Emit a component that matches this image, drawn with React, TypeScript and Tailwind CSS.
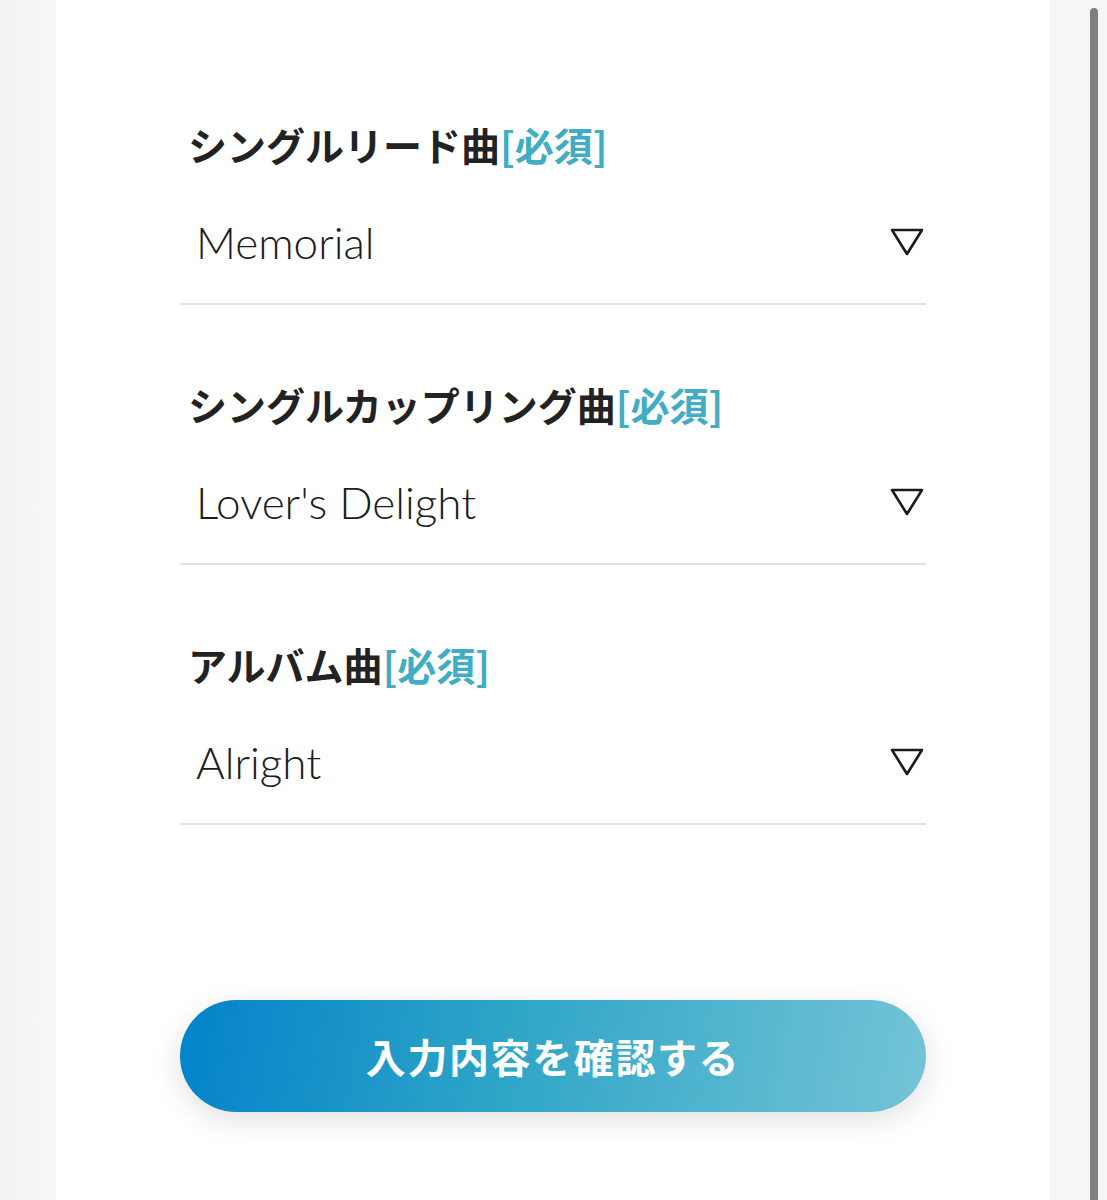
import { useState } from "react";

const fields = [
    { label: "シングルリード曲", value: "Memorial" },
    { label: "シングルカップリング曲", value: "Lover's Delight" },
    { label: "アルバム曲", value: "Alright" },
];

function Triangle() {
    return (
        <svg width="34" height="28" viewBox="0 0 34 28" className="shrink-0">
            <path d="M2 2 L32 2 L17 26 Z" fill="none" stroke="#1a1a1a" strokeWidth="2.6" strokeLinejoin="round" />
        </svg>
    );
}

function SelectField({ label, value }: { label: string; value: string }) {
    const [v] = useState(value);
    return (
        <div className="flex flex-col">
            <div className="pl-2 text-[39px] font-bold leading-[46px] text-[#222]">
                {label}
                <span className="text-[#41acc3]">[必須]</span>
            </div>
            <div className="mt-[48px] flex items-center justify-between border-b-2 border-[#e3e3e3] pb-[34px] pl-4 pr-[2px]">
                <span className="font-['Lato','Noto_Sans',sans-serif] text-[44px] font-light leading-[54px] text-[#1c1c1c]">
                    {v}
                </span>
                <Triangle />
            </div>
        </div>
    );
}

export default function App() {
    return (
        <div className="flex min-h-[1200px] bg-[#f6f6f6] font-['Noto_Sans_CJK_JP',sans-serif]">
            <div className="w-14 bg-gradient-to-r from-[#f2f2f2] to-[#f8f8f8]" />
            <main className="w-[994px] bg-white px-[124px] pt-[121px]">
                <div className="flex flex-col gap-[76px]">
                    {fields.map((f) => (
                        <SelectField key={f.label} label={f.label} value={f.value} />
                    ))}
                </div>
                <button className="mt-[175px] flex h-[112px] w-full items-center justify-center rounded-full bg-[linear-gradient(100deg,#0282ca_0%,#30a6c7_45%,#74c4d6_100%)] text-[40px] font-bold tracking-[0.04em] text-white shadow-[0_8px_30px_rgba(0,0,0,0.12)]">
                    入力内容を確認する
                </button>
            </main>
            <div className="relative flex-1 bg-[#f6f6f6]">
                <div className="absolute left-[40px] top-2 bottom-0 w-2 rounded-t-full bg-[#7f7f7f]" />
            </div>
        </div>
    );
}
